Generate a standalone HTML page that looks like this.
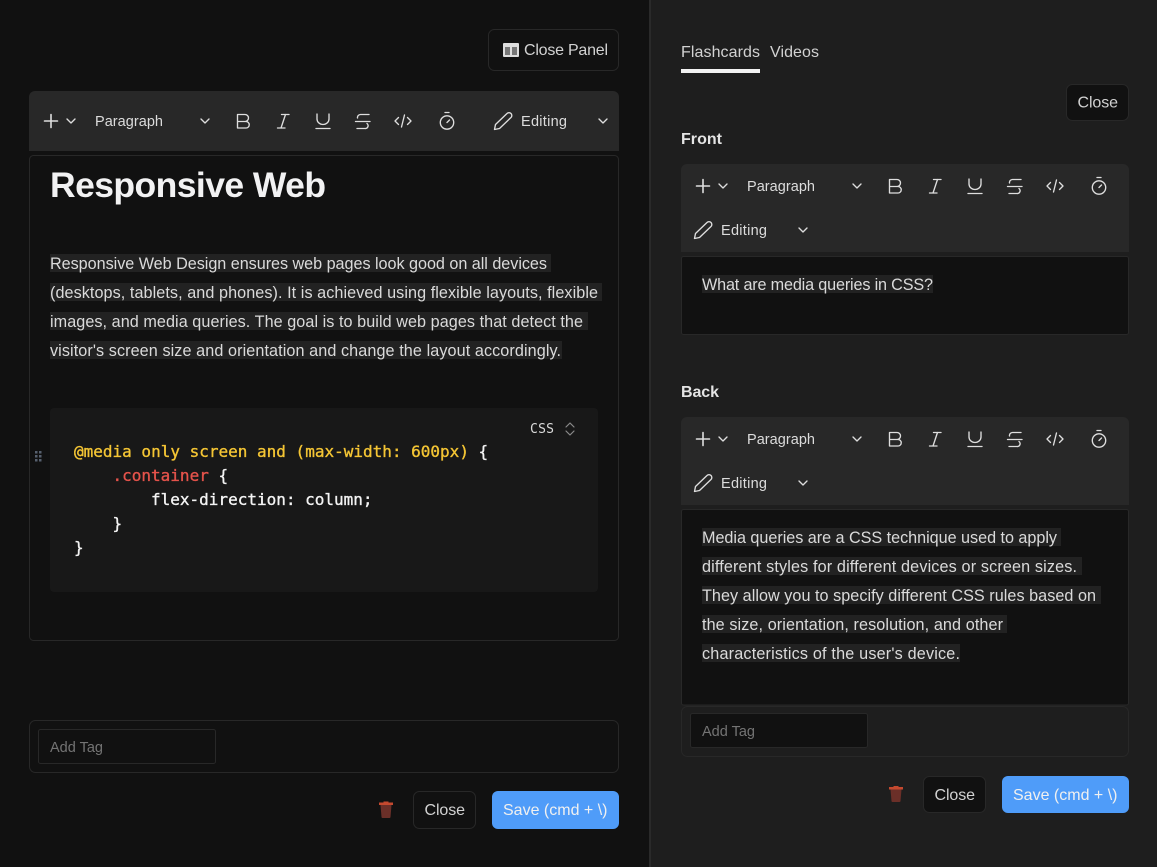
<!DOCTYPE html>
<html lang="en">
<head>
<meta charset="utf-8">
<title>Responsive Web</title>
<style>
html,body{margin:0;padding:0;background:#111;}
body{width:1157px;height:867px;overflow:hidden;position:relative;}
svg{position:absolute;left:0;top:0;display:block;}
text{font-family:"Liberation Sans",sans-serif;font-size:16.2px;fill:#dadada;}
.ui{font-size:16px;fill:#d2d2d2;}
.tb{font-size:14.5px;fill:#dcdcdc;}
.m{font-family:"DejaVu Sans Mono",monospace;font-size:16px;font-weight:400;stroke-width:.35px;}
.y{fill:#f4c534;stroke:#f4c534;}.r{fill:#e5534b;stroke:#e5534b;}.w{fill:#f4f4f4;stroke:#f4f4f4;}
.b{fill:#f2f2f3;font-weight:700;font-size:35.5px;}
.ph{font-size:14.5px;fill:#747474;}
.ic{fill:none;stroke:#dedede;stroke-width:1.35;stroke-linecap:round;stroke-linejoin:round;}
.hl{fill:#222;}
.bd{stroke:#282828;stroke-width:1;}
</style>
</head>
<body>
<svg width="1157" height="867" viewBox="0 0 1157 867" xmlns="http://www.w3.org/2000/svg">
<!-- panels -->
<rect x="0" y="0" width="649" height="867" fill="#111"/>
<rect x="649" y="0" width="2" height="867" fill="#2a2a2a"/>
<rect x="651" y="0" width="506" height="867" fill="#1e1e1e"/>

<!-- Close panel -->
<rect x="488.5" y="29.5" width="130" height="41" rx="6" fill="#111" class="bd"/>
<rect x="503" y="43" width="16" height="14" rx="1" fill="#dedede"/>
<rect x="505" y="47" width="5" height="8" fill="#777"/>
<rect x="512" y="47" width="5" height="8" fill="#777"/>
<text class="ui" x="524" y="55" textLength="84" lengthAdjust="spacing">Close Panel</text>

<!-- Left toolbar -->
<path d="M29 151V97a6 6 0 0 1 6-6H613a6 6 0 0 1 6 6V151Z" fill="#282828"/>
<g>
<path class="ic" style="stroke-width:1.6" d="M44.5 121H57.5M51 114.5V127.5"/>
<path class="ic" d="M67 119L71 123L75 119"/>
<text class="tb" x="95" y="126" textLength="68" lengthAdjust="spacing">Paragraph</text>
<path class="ic" d="M201 119L205 123L209 119"/>
<path class="ic" d="M237.5 114.5H245a3.5 3.5 0 0 1 0 7H237.5ZM237.5 121.5H246a3.25 3.25 0 0 1 0 6.5H237.5Z"/>
<path class="ic" d="M281.5 114.5H289M277.5 128H285M285.5 114.5L281 128"/>
<path class="ic" d="M317 114V119a6 5.5 0 0 0 12 0V114M316 128.5H330"/>
<path class="ic" d="M369 114.5H360.5a3 3 0 0 0-3 3.5M355.5 121.5H370M367 123.5a2.8 2.8 0 0 1-2 5H357"/>
<path class="ic" d="M398.5 117.5L395 121L398.5 124.5M407.5 117.5L411 121L407.5 124.5M404.5 115L401.5 127"/>
<circle class="ic" cx="447" cy="122.5" r="6.7"/>
<path class="ic" d="M445 112.5H449M447 122.5L449.5 120"/>
</g>
<g>
<path class="ic" d="M494.5 129.5L495.5 124.5L507 113.5a2.6 2.6 0 0 1 4 4L499.5 128.5Z"/>
<text class="tb" x="521" y="126" textLength="46" lengthAdjust="spacing">Editing</text>
</g>
<path class="ic" d="M599 119L603 123L607 119"/>

<!-- Left editor -->
<rect x="29.5" y="155.5" width="589" height="485" rx="4" fill="#111" class="bd"/>
<text class="b" x="50" y="197" textLength="276" lengthAdjust="spacing">Responsive Web</text>

<rect class="hl" x="50" y="254" width="501" height="18"/>
<rect class="hl" x="50" y="283" width="552" height="18"/>
<rect class="hl" x="50" y="312" width="538" height="18"/>
<rect class="hl" x="50" y="341" width="512" height="18"/>
<text x="50" y="269" textLength="497" lengthAdjust="spacing">Responsive Web Design ensures web pages look good on all devices</text>
<text x="50" y="298" textLength="548" lengthAdjust="spacing">(desktops, tablets, and phones). It is achieved using flexible layouts, flexible</text>
<text x="50" y="327" textLength="533" lengthAdjust="spacing">images, and media queries. The goal is to build web pages that detect the</text>
<text x="50" y="356" textLength="511" lengthAdjust="spacing">visitor's screen size and orientation and change the layout accordingly.</text>

<!-- Code block -->
<rect x="50" y="408" width="548" height="184" rx="4" fill="#181818"/>
<text x="530" y="433" style="font-family:'DejaVu Sans Mono',monospace;font-size:13px" textLength="24" lengthAdjust="spacing">CSS</text>
<path d="M566 427L570 423L574 427" fill="none" stroke="#8a8a8a" stroke-width="1.2" stroke-linecap="round" stroke-linejoin="round"/>
<path d="M566 431L570 435L574 431" fill="none" stroke="#8a8a8a" stroke-width="1.2" stroke-linecap="round" stroke-linejoin="round"/>
<g fill="#56606e">
<rect x="35" y="451" width="2.5" height="2.5"/><rect x="39" y="451" width="2.5" height="2.5"/>
<rect x="35" y="455" width="2.5" height="2.5"/><rect x="39" y="455" width="2.5" height="2.5"/>
<rect x="35" y="459" width="2.5" height="2.5"/><rect x="39" y="459" width="2.5" height="2.5"/>
</g>
<text class="m y" x="74" y="457" xml:space="preserve">@media only screen and (max-width: 600px)</text>
<text class="m w" x="478.5" y="457">{</text>
<text class="m r" x="112.5" y="481">.container</text>
<text class="m w" x="218.5" y="481">{</text>
<text class="m w" x="151" y="505">flex-direction: column;</text>
<text class="m w" x="112.5" y="529">}</text>
<text class="m w" x="74" y="553">}</text>

<!-- Left tags -->
<rect x="29.5" y="720.5" width="589" height="52" rx="6" fill="#111" class="bd"/>
<rect x="38.5" y="729.5" width="177" height="34" rx="2" fill="#111" class="bd"/>
<text class="ph" x="50" y="752" textLength="53" lengthAdjust="spacing">Add Tag</text>

<!-- Left actions -->
<path d="M379 802.5H393V805H379Z" fill="#c4492f"/>
<path d="M383.5 801.5H388.5V803H383.5Z" fill="#c4492f"/>
<path d="M380.5 805H391.5L390.5 817a1 1 0 0 1-1 1H382.5a1 1 0 0 1-1-1Z" fill="#6b2f28"/>
<rect x="413.5" y="791.5" width="62" height="37" rx="6" fill="#111" class="bd"/>
<text class="ui" x="424.5" y="815" textLength="40.5" lengthAdjust="spacing">Close</text>
<rect x="492" y="791" width="127" height="38" rx="6" fill="#4f9cf9"/>
<text class="ui" x="503" y="815" textLength="104.5" lengthAdjust="spacing" style="fill:#f0f0f0">Save (cmd + \)</text>

<!-- Tabs -->
<text class="ui" x="681" y="57" textLength="79" lengthAdjust="spacing">Flashcards</text>
<text class="ui" x="770" y="57" textLength="49" lengthAdjust="spacing">Videos</text>
<rect x="681" y="69" width="79" height="4" fill="#f2f2f2"/>
<rect x="1066.5" y="84.5" width="62" height="36" rx="6" fill="#111" class="bd"/>
<text class="ui" x="1077.5" y="107.5" textLength="40.5" lengthAdjust="spacing">Close</text>

<!-- Front -->
<text x="681" y="144" textLength="41" lengthAdjust="spacing" style="font-size:16px;font-weight:700;fill:#e4e4e4">Front</text>
<path d="M681 252V170a6 6 0 0 1 6-6H1123a6 6 0 0 1 6 6V252Z" fill="#282828"/>
<g transform="translate(652 65)">
<path class="ic" style="stroke-width:1.6" d="M44.5 121H57.5M51 114.5V127.5"/>
<path class="ic" d="M67 119L71 123L75 119"/>
<text class="tb" x="95" y="126" textLength="68" lengthAdjust="spacing">Paragraph</text>
<path class="ic" d="M201 119L205 123L209 119"/>
<path class="ic" d="M237.5 114.5H245a3.5 3.5 0 0 1 0 7H237.5ZM237.5 121.5H246a3.25 3.25 0 0 1 0 6.5H237.5Z"/>
<path class="ic" d="M281.5 114.5H289M277.5 128H285M285.5 114.5L281 128"/>
<path class="ic" d="M317 114V119a6 5.5 0 0 0 12 0V114M316 128.5H330"/>
<path class="ic" d="M369 114.5H360.5a3 3 0 0 0-3 3.5M355.5 121.5H370M367 123.5a2.8 2.8 0 0 1-2 5H357"/>
<path class="ic" d="M398.5 117.5L395 121L398.5 124.5M407.5 117.5L411 121L407.5 124.5M404.5 115L401.5 127"/>
<circle class="ic" cx="447" cy="122.5" r="6.7"/>
<path class="ic" d="M445 112.5H449M447 122.5L449.5 120"/>
</g>
<g transform="translate(200 109)">
<path class="ic" d="M494.5 129.5L495.5 124.5L507 113.5a2.6 2.6 0 0 1 4 4L499.5 128.5Z"/>
<text class="tb" x="521" y="126" textLength="46" lengthAdjust="spacing">Editing</text>
<path class="ic" d="M599 119L603 123L607 119"/>
</g>
<rect x="681.5" y="256.5" width="447" height="78" rx="2" fill="#111" class="bd"/>
<rect class="hl" x="702" y="275" width="231" height="18"/>
<text x="702" y="290" textLength="231" lengthAdjust="spacing">What are media queries in CSS?</text>

<!-- Back -->
<text x="681" y="397" textLength="38" lengthAdjust="spacing" style="font-size:16px;font-weight:700;fill:#e4e4e4">Back</text>
<path d="M681 505V423a6 6 0 0 1 6-6H1123a6 6 0 0 1 6 6V505Z" fill="#282828"/>
<g transform="translate(652 318)">
<path class="ic" style="stroke-width:1.6" d="M44.5 121H57.5M51 114.5V127.5"/>
<path class="ic" d="M67 119L71 123L75 119"/>
<text class="tb" x="95" y="126" textLength="68" lengthAdjust="spacing">Paragraph</text>
<path class="ic" d="M201 119L205 123L209 119"/>
<path class="ic" d="M237.5 114.5H245a3.5 3.5 0 0 1 0 7H237.5ZM237.5 121.5H246a3.25 3.25 0 0 1 0 6.5H237.5Z"/>
<path class="ic" d="M281.5 114.5H289M277.5 128H285M285.5 114.5L281 128"/>
<path class="ic" d="M317 114V119a6 5.5 0 0 0 12 0V114M316 128.5H330"/>
<path class="ic" d="M369 114.5H360.5a3 3 0 0 0-3 3.5M355.5 121.5H370M367 123.5a2.8 2.8 0 0 1-2 5H357"/>
<path class="ic" d="M398.5 117.5L395 121L398.5 124.5M407.5 117.5L411 121L407.5 124.5M404.5 115L401.5 127"/>
<circle class="ic" cx="447" cy="122.5" r="6.7"/>
<path class="ic" d="M445 112.5H449M447 122.5L449.5 120"/>
</g>
<g transform="translate(200 362)">
<path class="ic" d="M494.5 129.5L495.5 124.5L507 113.5a2.6 2.6 0 0 1 4 4L499.5 128.5Z"/>
<text class="tb" x="521" y="126" textLength="46" lengthAdjust="spacing">Editing</text>
<path class="ic" d="M599 119L603 123L607 119"/>
</g>
<rect x="681.5" y="509.5" width="447" height="195.5" rx="2" fill="#111" class="bd"/>
<rect class="hl" x="702" y="528" width="359" height="18"/>
<rect class="hl" x="702" y="557" width="380" height="18"/>
<rect class="hl" x="702" y="586" width="399" height="18"/>
<rect class="hl" x="702" y="615" width="305" height="18"/>
<rect class="hl" x="702" y="644" width="258" height="18"/>
<text x="702" y="543" textLength="355" lengthAdjust="spacing">Media queries are a CSS technique used to apply</text>
<text x="702" y="572" textLength="375" lengthAdjust="spacing">different styles for different devices or screen sizes.</text>
<text x="702" y="601" textLength="394" lengthAdjust="spacing">They allow you to specify different CSS rules based on</text>
<text x="702" y="630" textLength="301" lengthAdjust="spacing">the size, orientation, resolution, and other</text>
<text x="702" y="659" textLength="258" lengthAdjust="spacing">characteristics of the user's device.</text>

<!-- Right tags -->
<rect x="681.5" y="706.5" width="447" height="50" rx="6" fill="#1e1e1e" class="bd"/>
<rect x="690.5" y="713.5" width="177" height="34" rx="2" fill="#111" class="bd"/>
<text class="ph" x="702" y="736" textLength="53" lengthAdjust="spacing">Add Tag</text>

<!-- Right actions -->
<path d="M889 787H903V789.5H889Z" fill="#c4492f"/>
<path d="M893.5 786H898.5V787.5H893.5Z" fill="#c4492f"/>
<path d="M890.5 789.5H901.5L900.5 801a1 1 0 0 1-1 1H892.5a1 1 0 0 1-1-1Z" fill="#6b2f28"/>
<rect x="923.5" y="776.5" width="62" height="36" rx="6" fill="#111" class="bd"/>
<text class="ui" x="934.5" y="800" textLength="40.5" lengthAdjust="spacing">Close</text>
<rect x="1002" y="776" width="127" height="37" rx="6" fill="#4f9cf9"/>
<text class="ui" x="1013" y="800" textLength="104.5" lengthAdjust="spacing" style="fill:#f0f0f0">Save (cmd + \)</text>
</svg>
</body>
</html>
